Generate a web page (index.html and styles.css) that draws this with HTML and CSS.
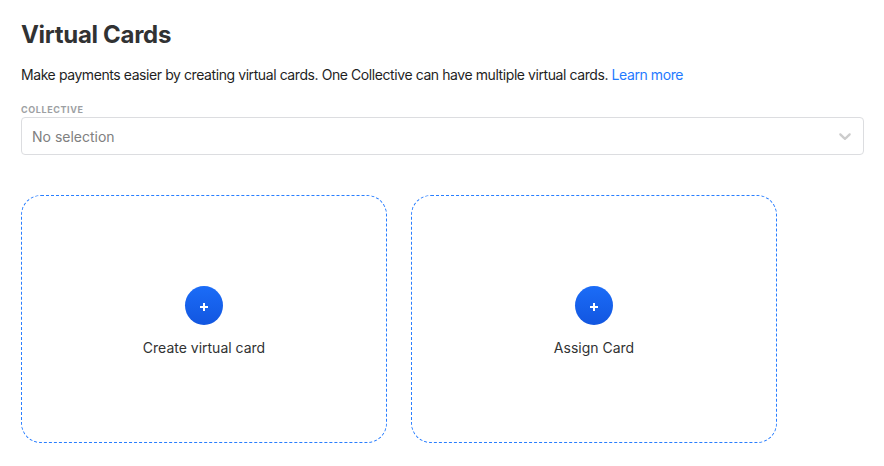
FILE: index.html
```html
<!DOCTYPE html>
<html lang="en">
<head>
<meta charset="utf-8">
<title>Virtual Cards</title>
<link rel="stylesheet" href="styles.css">
</head>
<body>
<main class="page">
  <h1 class="title">Virtual Cards</h1>
  <p class="intro">Make payments easier by creating virtual cards. One Collective can have multiple virtual cards. <a class="link" href="#">Learn more</a></p>
  <div class="label">COLLECTIVE</div>
  <div class="select">
    <span class="placeholder">No selection</span>
    <svg class="chevron" width="20" height="20" viewBox="0 0 20 20"><path fill="currentColor" d="M4.516 7.548c0.436-0.446 1.043-0.481 1.576 0l3.908 3.747 3.908-3.747c0.533-0.481 1.141-0.446 1.574 0 0.436 0.445 0.408 1.197 0 1.615-0.406 0.418-4.695 4.502-4.695 4.502-0.217 0.223-0.502 0.335-0.787 0.335s-0.57-0.112-0.789-0.335c0 0-4.287-4.084-4.695-4.502s-0.436-1.17 0-1.615z"/></svg>
  </div>
  <div class="cards">
    <div class="card">
      <button class="add"><svg width="8" height="8" viewBox="0 0 8 8"><path d="M4 0v8M0 4h8"/></svg></button>
      <span class="caption">Create virtual card</span>
    </div>
    <div class="card">
      <button class="add"><svg width="8" height="8" viewBox="0 0 8 8"><path d="M4 0v8M0 4h8"/></svg></button>
      <span class="caption">Assign Card</span>
    </div>
  </div>
</main>
</body>
</html>
```
FILE: styles.css
```css
* { box-sizing: border-box; }
body { margin: 0; background: #fff; color: #313233; font-family: Inter, sans-serif; }
.page { padding: 19px 20px 0 21px; }
.title { margin: 0; font-size: 24px; line-height: 32px; font-weight: 700; letter-spacing: -0.3px; }
.intro { margin: 14px 0 0; font-size: 14px; line-height: 20px; letter-spacing: -0.42px; color: #1f1f1f; white-space: nowrap; }
.link { color: #1f7aff; text-decoration: none; }
.label { margin-top: 19px; font-size: 9px; line-height: 12px; height: 13px; font-weight: 700; letter-spacing: 0.6px; color: #9d9fa3; }
.select { display: flex; align-items: center; justify-content: space-between; height: 38px; padding: 0 8px 0 10px; border: 1px solid #dcdde0; border-radius: 4px; }
.placeholder { padding-top: 2px; font-size: 14px; line-height: 20px; color: #808080; }
.chevron { color: #ccc; }
.cards { display: flex; gap: 24px; margin-top: 40px; }
.card { display: flex; flex-direction: column; align-items: center; width: 366px; height: 248px; padding-top: 90px; border: 1px dashed #297eff; border-radius: 20px; }
.add { display: flex; align-items: center; justify-content: center; width: 38px; height: 39px; padding: 3px 0 0; border: 0; border-radius: 50%; background: linear-gradient(#1b6cf7, #1256e0); stroke: #fff; stroke-width: 2; fill: none; }
.caption { margin-top: 13px; font-size: 14px; line-height: 20px; color: #313233; }
```
